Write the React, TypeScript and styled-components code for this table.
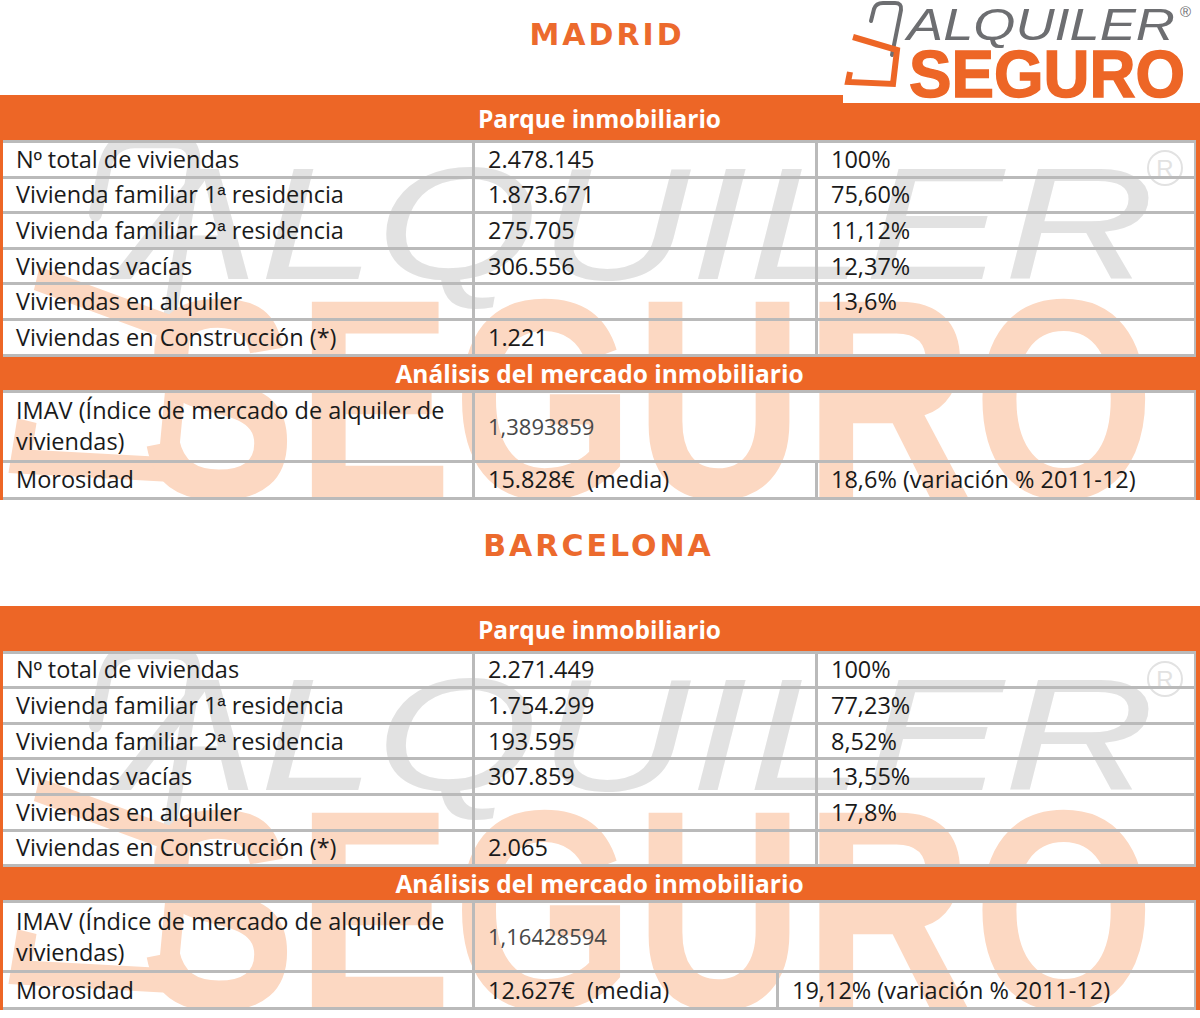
import React from 'react'
import styled, { createGlobalStyle } from 'styled-components'

const ORANGE = '#ed6626'
const LINE = '#bababa'
const WM_GRAY = '#e2e2e2'
const WM_PEACH = '#fcd8c2'

const GlobalStyle = createGlobalStyle`
  body {
    margin: 0;
    background: #ffffff;
    font-family: "Open Sans", "Noto Sans", sans-serif;
  }
`

const Page = styled.div`
  position: relative;
  width: 1200px;
`

const TitleBar = styled.div<{ $h: number; $pt: number }>`
  height: ${(p) => p.$h}px;
  padding-top: ${(p) => p.$pt}px;
  box-sizing: border-box;
  text-align: center;
`

const CityTitle = styled.h1<{ $shift: number }>`
  margin: 0 0 0 ${(p) => p.$shift}px;
  font-family: "DejaVu Sans", sans-serif;
  font-weight: 700;
  font-size: 30px;
  line-height: 40px;
  letter-spacing: 3px;
  color: #ec6a2d;
`

const LogoBox = styled.div`
  position: absolute;
  top: 0;
  right: 0;
  width: 357px;
  height: 103px;
  background: #ffffff;
  z-index: 3;
`

const TableBlock = styled.div`
  position: relative;
  border-left: 3px solid ${ORANGE};
  border-right: 4px solid ${ORANGE};
  background: #ffffff;
  overflow: hidden;
`

const Watermark = styled.svg`
  position: absolute;
  left: 0;
  top: 0;
  width: 100%;
  height: 100%;
  z-index: 0;
  pointer-events: none;
`

const Band = styled.div<{ $h: number; $pt: number }>`
  position: relative;
  z-index: 1;
  height: ${(p) => p.$h - p.$pt}px;
  padding-top: ${(p) => p.$pt}px;
  line-height: ${(p) => p.$h - p.$pt}px;
  background: ${ORANGE};
  border-bottom: 3px solid ${LINE};
  color: #ffffff;
  font-weight: 700;
  font-size: 24.5px;
  text-align: center;
`

const Row = styled.div<{ $cols: string; $h: number }>`
  position: relative;
  z-index: 1;
  display: grid;
  grid-template-columns: ${(p) => p.$cols};
  height: ${(p) => p.$h}px;
  border-bottom: 3px solid ${LINE};
`

const Cell = styled.div<{ $last?: boolean }>`
  box-sizing: border-box;
  display: flex;
  align-items: center;
  padding-left: 13px;
  border-right: ${(p) => (p.$last ? 2 : 3)}px solid ${LINE};
  font-size: 23.5px;
  font-weight: 500;
  line-height: 31px;
  color: #1a1a1a;
  white-space: pre;
`

// los ordinales subrayados (º, ª) como en Calibri/Arial
const Ord = styled.span`
  font-family: "Liberation Sans", Arial, sans-serif;
  font-size: 22px;
`

const SoftValue = styled.span`
  font-size: 22px;
  font-weight: 400;
  color: #484848;
`

type CityData = {
  name: string
  shift: number
  titleH: number
  titlePt: number
  rows: string[][]
  imav: string
  moro: [string, string]
  moroCols: string
}

const LABELS: React.ReactNode[] = [
  <>
    N<Ord>º</Ord> total de viviendas
  </>,
  <>
    Vivienda familiar 1<Ord>ª</Ord> residencia
  </>,
  <>
    Vivienda familiar 2<Ord>ª</Ord> residencia
  </>,
  'Viviendas vacías',
  'Viviendas en alquiler',
  'Viviendas en Construcción (*)',
]

const cities: CityData[] = [
  {
    name: 'MADRID',
    shift: 14,
    titleH: 95,
    titlePt: 15,
    rows: [
      ['2.478.145', '100%'],
      ['1.873.671', '75,60%'],
      ['275.705', '11,12%'],
      ['306.556', '12,37%'],
      ['', '13,6%'],
      ['1.221', ''],
    ],
    imav: '1,3893859',
    moro: ['15.828€  (media)', '18,6% (variación % 2011-12)'],
    moroCols: '472px 343px 1fr',
  },
  {
    name: 'BARCELONA',
    shift: -3,
    titleH: 106,
    titlePt: 26,
    rows: [
      ['2.271.449', '100%'],
      ['1.754.299', '77,23%'],
      ['193.595', '8,52%'],
      ['307.859', '13,55%'],
      ['', '17,8%'],
      ['2.065', ''],
    ],
    imav: '1,16428594',
    moro: ['12.627€  (media)', '19,12% (variación % 2011-12)'],
    moroCols: '472px 304px 1fr',
  },
]

// logo de cabecera
const Logo = () => (
  <svg width="357" height="103" viewBox="0 0 357 103">
    <path
      d="M28 21 L31 9 Q33 3 40 3 L52 3 Q59 3 58 10 L49 55"
      fill="none"
      stroke="#6d6e71"
      strokeWidth="4"
      strokeLinecap="round"
    />
    <path d="M10 37 L54 50 L50 84 L5 82 L7 72" fill="none" stroke={ORANGE} strokeWidth="6" />
    <text
      x="64"
      y="40"
      fontFamily="Liberation Sans, sans-serif"
      fontStyle="italic"
      fontSize="45"
      fill="#6d6e71"
      textLength="268"
      lengthAdjust="spacingAndGlyphs"
    >
      ALQUILER
    </text>
    <text
      x="66"
      y="97"
      fontFamily="Liberation Sans, sans-serif"
      fontWeight="700"
      fontSize="66"
      fill={ORANGE}
      stroke={ORANGE}
      strokeWidth="1.5"
      textLength="276"
      lengthAdjust="spacingAndGlyphs"
    >
      SEGURO
    </text>
    <text x="337" y="17" fontFamily="Liberation Sans, sans-serif" fontSize="15" fill="#6d6e71">
      ®
    </text>
  </svg>
)

// marca de agua detrás de la tabla
const WatermarkArt = () => (
  <Watermark viewBox="3 0 1193 405" preserveAspectRatio="none">
    <g transform="translate(4 33) scale(3.27 4.07)">
      <path
        d="M28 21 L31 9 Q33 3 40 3 L52 3 Q59 3 58 10 L49 55"
        fill="none"
        stroke={WM_GRAY}
        strokeWidth="4"
        strokeLinecap="round"
      />
      <path d="M10 37 L54 50 L50 84 L5 82 L7 72" fill="none" stroke={WM_PEACH} strokeWidth="6" />
    </g>
    <text
      x="120"
      y="184"
      fontFamily="Liberation Sans, sans-serif"
      fontStyle="italic"
      fontSize="160"
      fill={WM_GRAY}
      textLength="1035"
      lengthAdjust="spacingAndGlyphs"
    >
      ALQUILER
    </text>
    <text
      x="140"
      y="403"
      fontFamily="Liberation Sans, sans-serif"
      fontWeight="700"
      fontSize="285"
      fill={WM_PEACH}
      textLength="1015"
      lengthAdjust="spacingAndGlyphs"
    >
      SEGURO
    </text>
    <circle cx="1165" cy="73" r="17" fill="none" stroke={WM_GRAY} strokeWidth="2" />
    <text x="1165" y="82" textAnchor="middle" fontFamily="Liberation Sans, sans-serif" fontSize="24" fill={WM_GRAY}>
      R
    </text>
  </Watermark>
)

const CityTable: React.FC<{ city: CityData }> = ({ city }) => (
  <>
    <TitleBar $h={city.titleH} $pt={city.titlePt}>
      <CityTitle $shift={city.shift}>{city.name}</CityTitle>
    </TitleBar>
    <TableBlock>
      <WatermarkArt />
      <Band $h={45} $pt={3}>Parque inmobiliario</Band>
      {city.rows.map((r, i) => (
        <Row key={i} $cols="472px 343px 1fr" $h={32.6}>
          <Cell>{LABELS[i]}</Cell>
          <Cell>{r[0]}</Cell>
          <Cell $last>{r[1]}</Cell>
        </Row>
      ))}
      <Band $h={33} $pt={0}>Análisis del mercado inmobiliario</Band>
      <Row $cols="472px 1fr" $h={67}>
        <Cell>
          IMAV (Índice de mercado de alquiler de
          <br />
          viviendas)
        </Cell>
        <Cell $last>
          <SoftValue>{city.imav}</SoftValue>
        </Cell>
      </Row>
      <Row $cols={city.moroCols} $h={34}>
        <Cell>Morosidad</Cell>
        <Cell>{city.moro[0]}</Cell>
        <Cell $last>{city.moro[1]}</Cell>
      </Row>
    </TableBlock>
  </>
)

const App: React.FC = () => (
  <>
    <GlobalStyle />
    <Page>
      <LogoBox>
        <Logo />
      </LogoBox>
      {cities.map((c) => (
        <CityTable key={c.name} city={c} />
      ))}
    </Page>
  </>
)

export default App
